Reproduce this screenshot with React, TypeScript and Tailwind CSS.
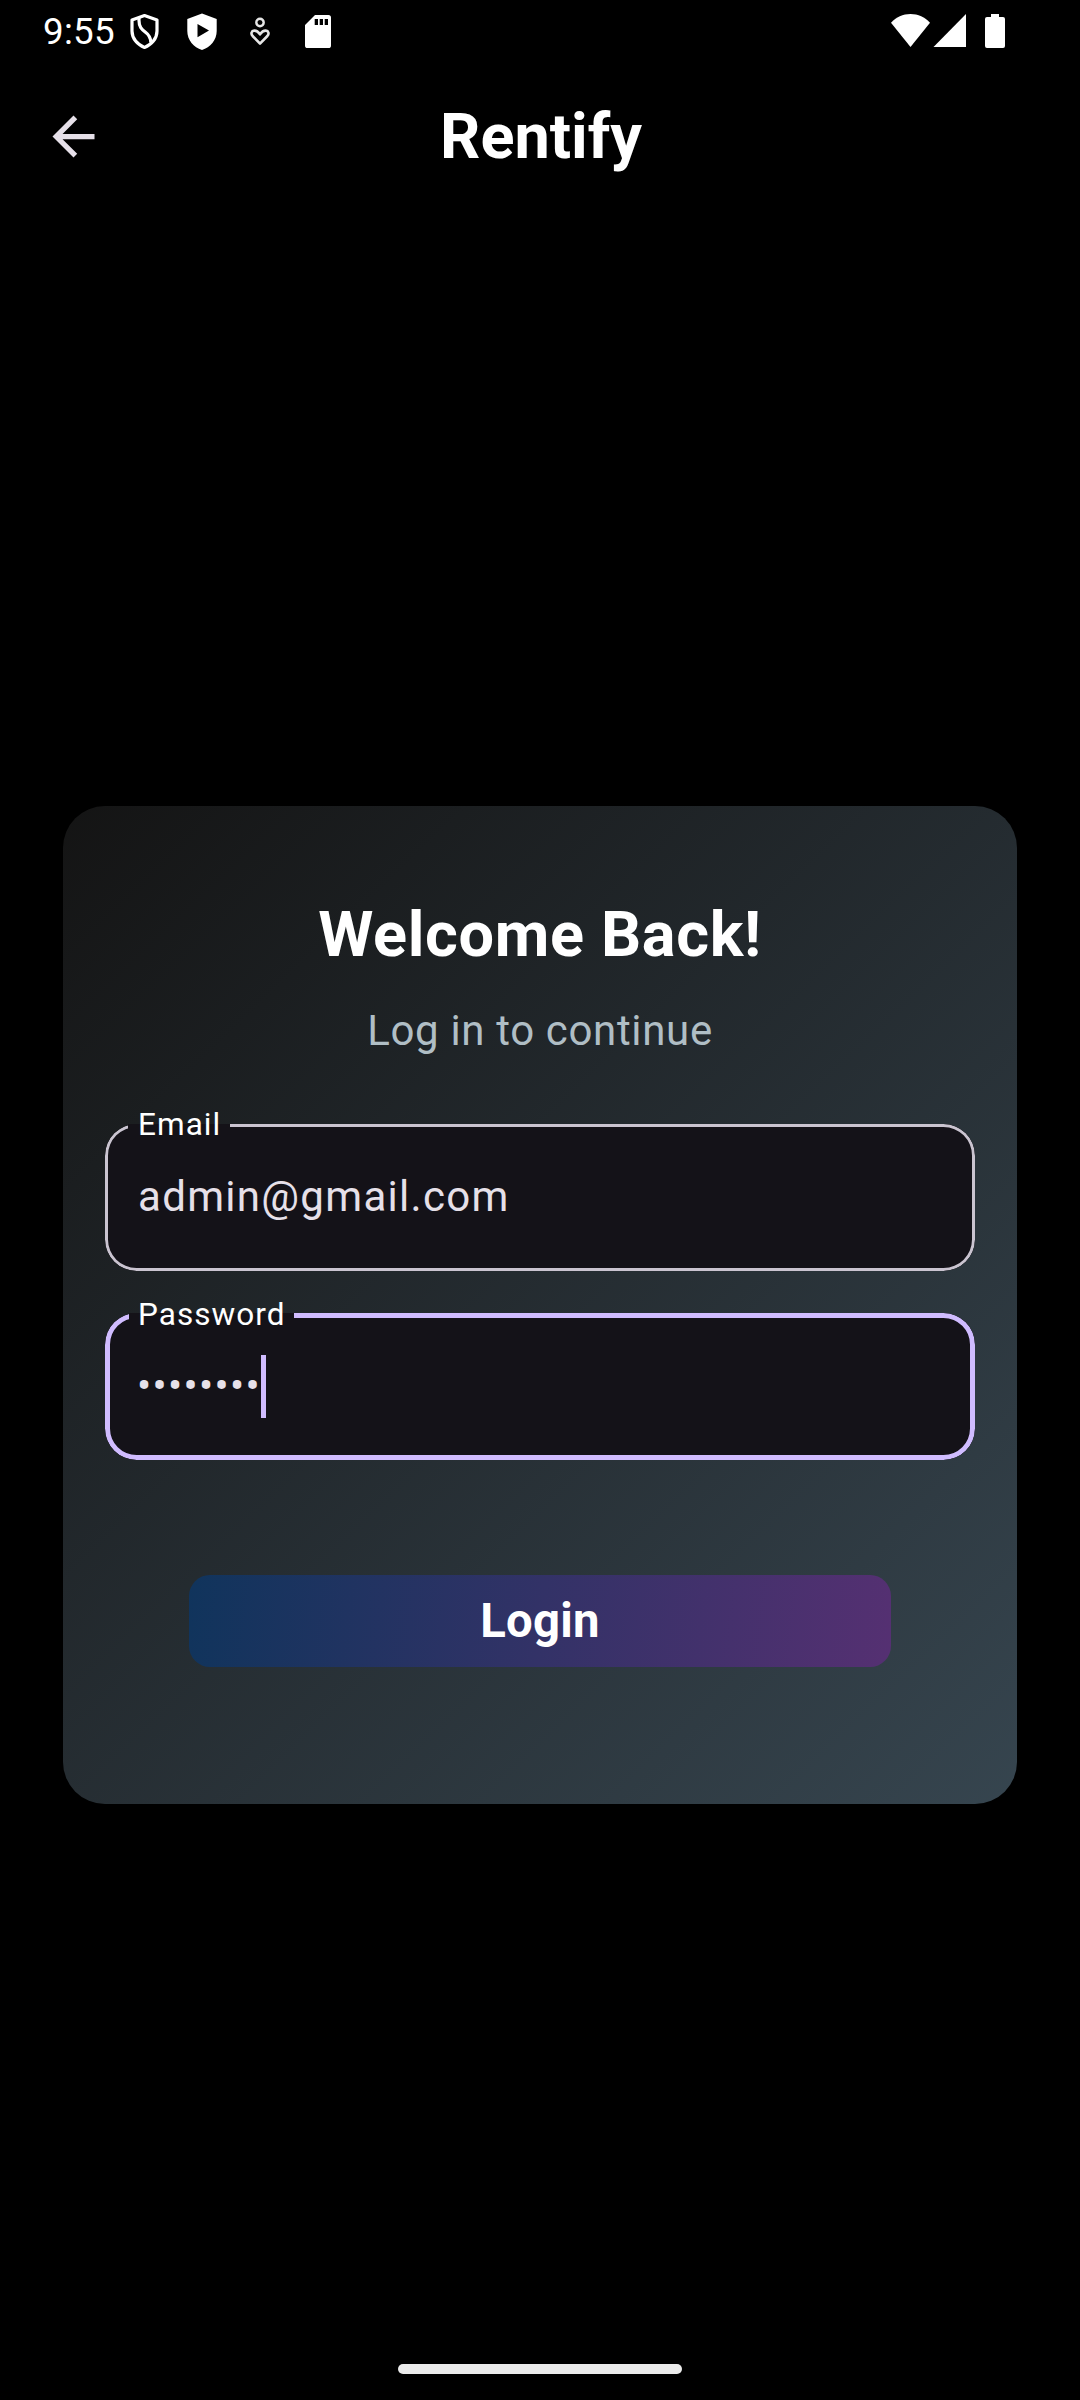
import React from "react";

function StatusIcons() {
  return (
    <svg className="ml-[12px] h-[40px] w-[206px]" viewBox="127 12 206 40" fill="none">
      {/* Outlined shield with S-shaped band */}
      <path
        d="M144.5 15.6 L157 20 V31 C157 38.5 151.5 45 144.5 47.4 C137.5 45 132 38.5 132 31 V20 Z"
        stroke="#fff"
        strokeWidth="3.2"
        strokeLinejoin="round"
      />
      <path
        d="M139 17.5 V20.5 C139 27 141.5 29.3 145.5 32.3 C149.5 35.3 150.8 38 150.8 42.5"
        stroke="#fff"
        strokeWidth="3.2"
      />
      {/* Filled shield with play triangle */}
      <path
        fillRule="evenodd"
        fill="#fff"
        d="M202 13.5 L216.7 19 V31 C216.7 40 210.3 47.5 202 50 C193.7 47.5 187.3 40 187.3 31 V19 Z M197.5 24 V37.3 L209 30.6 Z"
      />
      {/* Person with heart */}
      <circle cx="260" cy="22.5" r="3.7" stroke="#e6e6e6" strokeWidth="2.4" />
      <path
        d="M260 43.6 L252.6 36 C250.6 33.7 251.4 30.8 254.2 30.6 C256.8 30.4 258.4 32 260 34.4 C261.6 32 263.2 30.4 265.8 30.6 C268.6 30.8 269.4 33.7 267.4 36 Z"
        stroke="#e6e6e6"
        strokeWidth="2.6"
        strokeLinejoin="round"
      />
      {/* Memory card */}
      <path
        fillRule="evenodd"
        fill="#fff"
        d="M315 15 H328.4 Q331 15 331 17.6 V45.4 Q331 48 328.4 48 H307.6 Q305 48 305 45.4 V25 Z M314.7 19 V25 H318 V19 Z M319.7 19 V25 H323 V19 Z M324.7 19 V25 H328 V19 Z"
      />
    </svg>
  );
}

function SystemIcons() {
  return (
    <svg className="h-[40px] w-[118px]" viewBox="889 12 118 40" fill="#fff">
      <path d="M891 22.8 C896 17 903 14 910.5 14 C918 14 925 17 930 22.8 L910.5 47 Z" />
      <path d="M966 14 V47 H933.5 Z" />
      <path d="M991 14 H999 V17 H1003 Q1005 17 1005 19 V46 Q1005 48 1003 48 H987 Q985 48 985 46 V19 Q985 17 987 17 H991 Z" />
    </svg>
  );
}

function StatusBar() {
  return (
    <div className="flex h-[63px] items-center justify-between pl-[43px] pr-[73px] text-white">
      <div className="flex items-center">
        <span className="w-[72px] text-[36.75px] leading-[43px] tracking-[0.25px]">9:55</span>
        <StatusIcons />
      </div>
      <SystemIcons />
    </div>
  );
}

function Header() {
  return (
    <header className="grid h-[147px] grid-cols-[63px_1fr_63px] items-center px-[42px]">
      <button aria-label="Back">
        <svg className="h-[63px] w-[63px]" viewBox="0 0 24 24" fill="#e6e0e9">
          <path d="M20 11H7.83l5.59-5.59L12 4l-8 8 8 8 1.41-1.41L7.83 13H20v-2z" />
        </svg>
      </button>
      <h1 className="pl-[2px] text-center text-[63px] font-bold leading-[73px] text-white">Rentify</h1>
    </header>
  );
}

function Field(props: {
  label: string;
  borderClass: string;
  notchClass: string;
  labelClass: string;
  className?: string;
  children: React.ReactNode;
}) {
  return (
    <div className={`relative h-[147px] w-full ${props.className ?? ""}`}>
      <div className="h-full overflow-hidden rounded-[31.5px] bg-[#141218]">
        <div className={`relative flex h-full items-center rounded-[31.5px] pl-[32px] ${props.borderClass}`}>
          {props.children}
        </div>
        <div className={`absolute top-0 bg-[#141218] ${props.notchClass}`} />
      </div>
      <label
        className={`absolute left-[33px] text-[31.5px] leading-[37px] tracking-[1.05px] text-white ${props.labelClass}`}
      >
        {props.label}
      </label>
    </div>
  );
}

export default function App() {
  return (
    <div className="flex h-[2400px] w-[1080px] flex-col bg-black font-['Roboto',sans-serif]">
      <StatusBar />
      <Header />
      <main className="mx-[63px] mt-[596px] flex h-[998px] flex-col items-center rounded-[42px] bg-[linear-gradient(136.3deg,#141414,#36454f)] px-[42px] pt-[92px]">
        <h2 className="text-[63px] font-bold leading-[73px] tracking-[0.65625px] text-white">Welcome Back!</h2>
        <p className="mt-[35px] text-[42px] leading-[49px] tracking-[0.65625px] text-[#b0bec5]">Log in to continue</p>
        <Field
          label="Email"
          className="mt-[69px]"
          borderClass="shadow-[inset_0_0_0_3px_#cac4d0]"
          notchClass="left-[23px] h-[5px] w-[102px]"
          labelClass="top-[-18px]"
        >
          <span className="pb-[2px] pl-[1px] text-[42px] leading-[63px] tracking-[1.3125px] text-[#e6e0e9]">
            admin@gmail.com
          </span>
        </Field>
        <Field
          label="Password"
          className="mt-[42px]"
          borderClass="shadow-[inset_0_0_0_5px_#d0bcff]"
          notchClass="left-[24px] h-[7px] w-[165px]"
          labelClass="top-[-17px]"
        >
          <span className="pb-[3px] text-[42px] leading-[63px] tracking-[1.3125px] text-[#e6e0e9]">••••••••</span>
          <span className="h-[63px] w-[5px] bg-[#d0bcff]" />
        </Field>
        <button className="mt-[115px] flex h-[92px] w-[702px] items-center justify-center rounded-[21px] bg-[linear-gradient(97.5deg,#10345c,#553072)] text-[47.25px] font-bold leading-[56px] tracking-[0.2625px] text-white">
          Login
        </button>
      </main>
      <div className="mx-auto mt-[560px] h-[10px] w-[284px] rounded-full bg-[#ebebeb]" />
    </div>
  );
}
